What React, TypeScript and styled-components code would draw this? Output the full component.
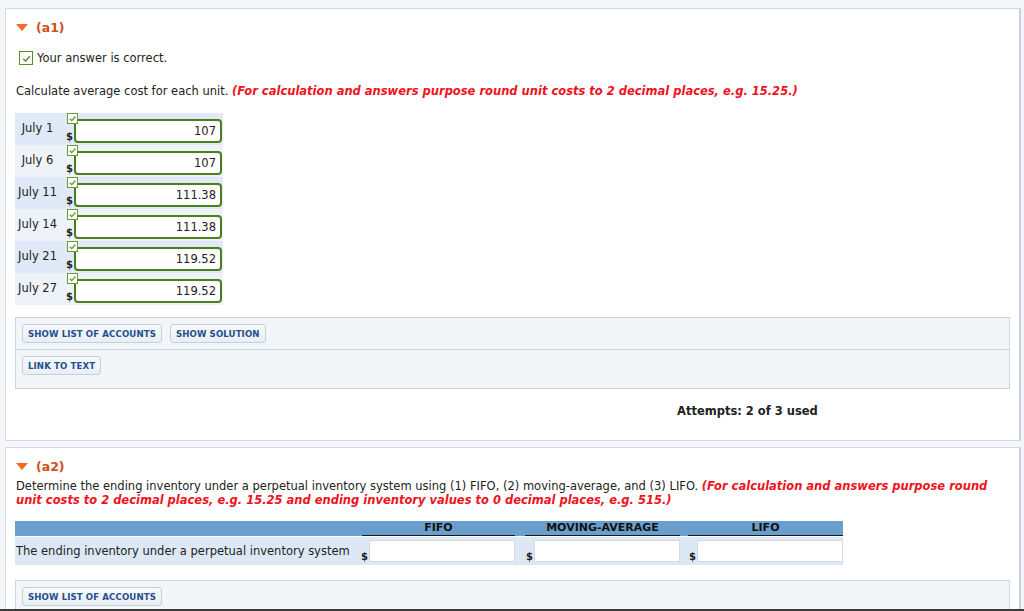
import React from "react";
import styled, { createGlobalStyle } from "styled-components";

const GlobalStyle = createGlobalStyle`
  html, body {
    margin: 0;
    padding: 0;
    background: #f4f6f9;
  }
  body {
    font-family: "DejaVu Sans", Verdana, sans-serif;
    font-size: 11.5px;
    color: #222;
    overflow: hidden;
  }
`;

const Page = styled.div`
  padding: 8px 3px 0 5px;
  display: flex;
  flex-direction: column;
  gap: 6px;
`;

const Panel = styled.section<{ $height?: number }>`
  background: #fff;
  border: 1px solid #d2d9e2;
  border-right: 2px solid #c7cfdd;
  height: ${(p) => (p.$height ? `${p.$height}px` : "auto")};
  box-sizing: border-box;
  padding: 0 9px 0 9px;
`;

const PartHeading = styled.div<{ $top: number }>`
  display: flex;
  align-items: center;
  gap: 8px;
  padding-top: ${(p) => p.$top}px;
  color: #cf4f16;
  font-weight: bold;
  font-size: 12.5px;
  height: 14px;
`;

const Arrow = styled.span`
  display: inline-block;
  width: 0;
  height: 0;
  border-left: 6px solid transparent;
  border-right: 6px solid transparent;
  border-top: 7px solid #f26a1f;
  margin-left: 1px;
`;

const CorrectLine = styled.div`
  display: flex;
  align-items: center;
  gap: 4px;
  margin-top: 16px;
  margin-left: 4px;
  height: 16px;
`;

const BigCheck = styled.span`
  width: 12px;
  height: 12px;
  border: 1.5px solid #5b8c2b;
  background: #fff;
  display: inline-flex;
  align-items: center;
  justify-content: center;
`;

const Instruction = styled.p`
  margin: 18px 0 0 1px;
  line-height: 14px;
`;

const Hint = styled.em`
  color: #f0121c;
  font-weight: bold;
`;

const CostTable = styled.div`
  margin-top: 15px;
  width: 208px;
  display: flex;
  flex-direction: column;
`;

const CostRow = styled.div<{ $shade: boolean }>`
  display: grid;
  grid-template-columns: 45px 163px;
  height: 32px;
  background: ${(p) => (p.$shade ? "#dfe9f7" : "#eef3fa")};
`;

const DateCell = styled.div`
  text-align: center;
  padding-top: 8px;
`;

const AnswerCell = styled.div`
  position: relative;
  display: flex;
  align-items: flex-end;
  padding-bottom: 2px;
  padding-left: 6px;
`;

const Dollar = styled.span`
  font-size: 10px;
  font-weight: bold;
  width: 8px;
  line-height: 10px;
  margin-bottom: 1px;
`;

const SmallCheck = styled.span`
  position: absolute;
  left: 7px;
  top: 0;
  width: 9px;
  height: 9px;
  border: 1px solid #6a9a32;
  background: #fff;
  display: flex;
  align-items: center;
  justify-content: center;
`;

const AnswerBox = styled.div`
  height: 20px;
  width: 140px;
  border: 2px solid #4c7e1a;
  border-radius: 4px;
  background: #fff;
  text-align: right;
  padding-right: 4px;
  line-height: 21px;
  box-sizing: content-box;
`;

const ToolPanel = styled.div<{ $top: number }>`
  margin-top: ${(p) => p.$top}px;
  border: 1px solid #cdd4de;
  background: #f3f6f9;
`;

const ToolRow = styled.div<{ $height: number; $divider?: boolean }>`
  height: ${(p) => p.$height}px;
  display: flex;
  gap: 8px;
  padding: 6px 0 0 6px;
  box-sizing: border-box;
  border-bottom: ${(p) => (p.$divider ? "1px solid #cdd4de" : "none")};
`;

const ToolButton = styled.button`
  font-family: "DejaVu Sans", Verdana, sans-serif;
  font-size: 8.6px;
  font-weight: bold;
  color: #23508c;
  height: 19px;
  padding: 0 5px;
  border: 1px solid #c5ced9;
  border-radius: 3px;
  background: linear-gradient(#f8fafc, #e9eef4);
  letter-spacing: 0.1px;
  cursor: pointer;
`;

const Attempts = styled.div`
  margin-top: 15px;
  padding-left: 662px;
  font-weight: bold;
`;

const Intro = styled.p`
  margin: 6px 0 0 1px;
  line-height: 14px;
  padding-right: 4px;
`;

const InventoryTable = styled.div`
  margin-top: 14px;
  width: 828px;
  display: grid;
  grid-template-columns: 343px 157px 165px 163px;
`;

const HeadBlank = styled.div`
  background: #6a9fcd;
  height: 15px;
`;

const HeadCell = styled.div<{ $inset: number }>`
  background: #6a9fcd;
  height: 15px;
  padding-left: ${(p) => p.$inset}px;
`;

const HeadLabel = styled.div`
  height: 14px;
  border-bottom: 1px solid #1a1a1a;
  text-align: center;
  font-weight: bold;
  font-size: 11px;
  line-height: 14px;
  color: #111;
`;

const BodyLabel = styled.div`
  background: #dde8f6;
  height: 28px;
  display: flex;
  align-items: center;
  padding-left: 1px;
  margin-top: 1px;
`;

const BodyCell = styled.div<{ $inset: number }>`
  background: #dde8f6;
  height: 28px;
  margin-top: 1px;
  display: flex;
  align-items: center;
  padding-left: ${(p) => p.$inset}px;
`;

const CellDollar = styled.span`
  font-size: 10px;
  font-weight: bold;
  width: 8px;
  align-self: flex-end;
  margin-bottom: 3px;
`;

const EmptyInput = styled.div`
  flex: 1;
  height: 20px;
  background: #fff;
  border: 1px solid #d6dbe1;
`;

const BottomEdge = styled.div`
  position: fixed;
  left: 0;
  right: 0;
  bottom: 0;
  height: 2px;
  background: #3a3a3a;
`;

const Tick = ({ size }: { size: number }) => (
  <svg width={size} height={size} viewBox="0 0 10 10">
    <path d="M2 5.2 L4.2 7.3 L8.2 2.8" fill="none" stroke="#5b9a2a" strokeWidth="1.4" />
  </svg>
);

const costs = [
  { date: "July 1", value: "107" },
  { date: "July 6", value: "107" },
  { date: "July 11", value: "111.38" },
  { date: "July 14", value: "111.38" },
  { date: "July 21", value: "119.52" },
  { date: "July 27", value: "119.52" },
];

const methods = [
  { name: "FIFO", inset: 4, cellInset: 3 },
  { name: "MOVING-AVERAGE", inset: 10, cellInset: 11 },
  { name: "LIFO", inset: 8, cellInset: 9 },
];

const App = () => {
  return (
    <>
      <GlobalStyle />
      <Page>
        <Panel $height={433}>
          <PartHeading $top={11}>
            <Arrow />
            (a1)
          </PartHeading>
          <CorrectLine>
            <BigCheck>
              <Tick size={11} />
            </BigCheck>
            Your answer is correct.
          </CorrectLine>
          <Instruction>
            Calculate average cost for each unit.{" "}
            <Hint>(For calculation and answers purpose round unit costs to 2 decimal places, e.g. 15.25.)</Hint>
          </Instruction>
          <CostTable>
            {costs.map((c, i) => (
              <CostRow key={c.date} $shade={i % 2 === 0}>
                <DateCell>{c.date}</DateCell>
                <AnswerCell>
                  <SmallCheck>
                    <Tick size={9} />
                  </SmallCheck>
                  <Dollar>$</Dollar>
                  <AnswerBox>{c.value}</AnswerBox>
                </AnswerCell>
              </CostRow>
            ))}
          </CostTable>
          <ToolPanel $top={12}>
            <ToolRow $height={32} $divider>
              <ToolButton>SHOW LIST OF ACCOUNTS</ToolButton>
              <ToolButton>SHOW SOLUTION</ToolButton>
            </ToolRow>
            <ToolRow $height={38}>
              <ToolButton>LINK TO TEXT</ToolButton>
            </ToolRow>
          </ToolPanel>
          <Attempts>Attempts: 2 of 3 used</Attempts>
        </Panel>
        <Panel $height={180}>
          <PartHeading $top={11}>
            <Arrow />
            (a2)
          </PartHeading>
          <Intro>
            Determine the ending inventory under a perpetual inventory system using (1) FIFO, (2) moving-average, and
            (3) LIFO.{" "}
            <Hint>
              (For calculation and answers purpose round unit costs to 2 decimal places, e.g. 15.25 and ending inventory
              values to 0 decimal places, e.g. 515.)
            </Hint>
          </Intro>
          <InventoryTable>
            <HeadBlank />
            {methods.map((m) => (
              <HeadCell key={m.name} $inset={m.inset}>
                <HeadLabel>{m.name}</HeadLabel>
              </HeadCell>
            ))}
            <BodyLabel>The ending inventory under a perpetual inventory system</BodyLabel>
            {methods.map((m) => (
              <BodyCell key={m.name} $inset={m.cellInset}>
                <CellDollar>$</CellDollar>
                <EmptyInput />
              </BodyCell>
            ))}
          </InventoryTable>
          <ToolPanel $top={15}>
            <ToolRow $height={32}>
              <ToolButton>SHOW LIST OF ACCOUNTS</ToolButton>
            </ToolRow>
          </ToolPanel>
        </Panel>
      </Page>
      <BottomEdge />
    </>
  );
};

export default App;
